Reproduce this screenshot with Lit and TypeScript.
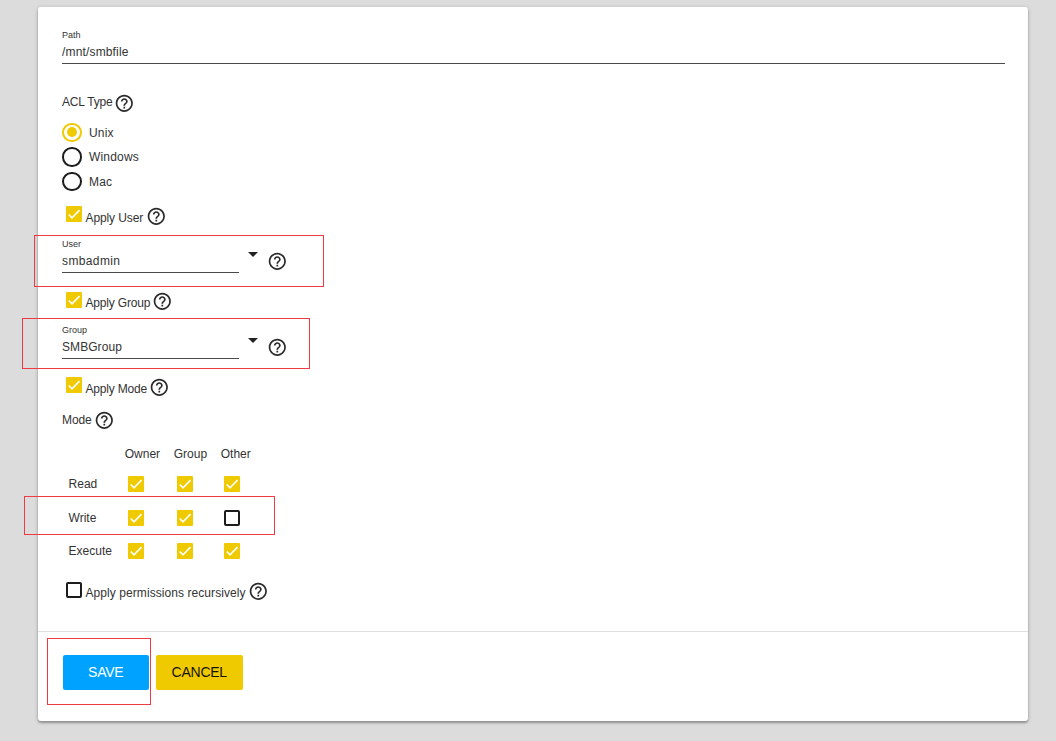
import { LitElement, html, css, svg, nothing } from "lit";
import { customElement } from "lit/decorators.js";
import { classMap } from "lit/directives/class-map.js";

const help = () => html`<svg class="help" viewBox="0 0 24 24" width="20.6" height="20.6" aria-hidden="true">
  <path fill="#2b2b2b" d="M11 18h2v-2h-2v2zm1-16C6.48 2 2 6.48 2 12s4.480 10 10 10 10-4.480 10-10S17.520 2 12 2zm0 18c-4.410 0-8-3.590-8-8s3.590-8 8-8 8 3.590 8 8-3.590 8-8 8zm0-14c-2.210 0-4 1.790-4 4h2c0-1.100.9-2 2-2s2 .9 2 2c0 2-3 1.750-3 5h2c0-2.250 3-2.500 3-5 0-2.210-1.790-4-4-4z" />
</svg>`;

const check = (on: boolean) => html`<span class=${classMap({ box: true, on })}>
  ${on
    ? html`<svg viewBox="0 0 24 24" width="16" height="16">${svg`<path d="M4.1 12.7 9 17.6 20.3 6.300" fill="none" stroke="#fff" stroke-width="2.500"/>`}</svg>`
    : nothing}
</span>`;

@customElement("app-root")
export class AppRoot extends LitElement {
  static styles = css`
    :host {
      display: block;
      position: relative;
      box-sizing: border-box;
      width: 1056px;
      height: 741px;
      padding: 7px 28px 20px 38px;
      background: #dcdcdc;
      overflow: hidden;
      font: 12px/20px "Liberation Sans", Arial, sans-serif;
      letter-spacing: 0.07px;
      color: #333;
    }
    .card {
      height: 714px;
      box-sizing: border-box;
      background: #fff;
      border-radius: 3px;
      box-shadow: 0 2px 2px rgba(0, 0, 0, 0.24), 0 1px 4px rgba(0, 0, 0, 0.2);
      display: flex;
      flex-direction: column;
    }
    .form {
      height: 625px;
      box-sizing: border-box;
      padding: 21px 23px 0 24px;
      border-bottom: 1px solid #e0e0e0;
    }
    svg { display: block; flex: none; }
    .field { height: 35px; border-bottom: 1px solid #4a4a4a; box-sizing: content-box; }
    .field small { display: block; font-size: 9px; line-height: 14px; letter-spacing: 0; }
    .field span { display: block; line-height: 20px; }
    .field .mid { letter-spacing: 0.16px; }
    .field .wide { letter-spacing: 0.38px; }
    .title { display: flex; align-items: center; height: 20px; gap: 2px; }
    .title svg { margin-top: 2px; }
    .acl { margin-top: 28px; letter-spacing: -0.2px; }
    .radios { padding-top: 8px; }
    .radio { display: flex; align-items: center; height: 24.600px; gap: 7.500px; letter-spacing: 0.18px; }
    .radio span { margin-top: 1px; }
    .dot {
      width: 19.500px; height: 19.500px; box-sizing: border-box;
      border: 2px solid #1c1c1c; border-radius: 50%;
      display: grid; place-items: center;
    }
    .dot.sel { border-color: #f0ca00; }
    .dot.sel::after { content: ""; width: 10px; height: 10px; border-radius: 50%; background: #f0ca00; }
    .box {
      width: 16px; height: 16px; box-sizing: border-box; flex: none;
      border: 2px solid #1c1c1c; border-radius: 2px; display: block;
    }
    .box.on { border: 0; border-radius: 1px; background: #f0ca00; }
    .apply { display: flex; align-items: center; height: 24px; padding-left: 3.500px; }
    .apply .box { margin: -3px 4px 0 0; }
    .apply .txt { margin-top: 4px; margin-right: 2.500px; }
    .apply .help { margin-top: 1px; }
    .tight { letter-spacing: -0.18px; }
    .tight .txt { margin-right: 2px; }
    .first { margin-top: 10px; letter-spacing: -0.1px; }
    .select { display: flex; height: 36px; margin: 9px 0 16.500px; }
    .select .field { width: 177px; }
    .select.low { margin: 10px 0 15.500px; }
    .arrow { width: 0; height: 0; border: 5px solid transparent; border-top-color: #222; border-bottom: 0; margin: 15px 8.500px 0 9px; }
    .select .help { margin-top: 14px; }
    .mode { margin-top: 11px; }
    .mode span { letter-spacing: -0.1px; }
    .grid {
      display: grid;
      grid-template-columns: 56.200px 49px 47px 45px;
      grid-template-rows: 27px 33.500px 33.500px 33.500px;
      padding-left: 6.500px;
      margin-top: 10.500px;
      align-items: center;
      letter-spacing: 0.02px;
    }
    .grid .box { margin-left: 3.600px; }
    .rec { margin-top: 11.500px; letter-spacing: 0.07px; }
    .rec .txt { margin-top: 4px; margin-right: 2px; }
    .actions { display: flex; gap: 7px; padding: 22.500px 24.500px; }
    button {
      width: 86.500px; height: 35.500px; border: 0; border-radius: 2px; padding: 0;
      font: 14px "Liberation Sans", Arial, sans-serif; letter-spacing: -0.25px;
      background: #f0ca00; color: #151500;
    }
    button.save { background: #00a2ff; color: #fff; }
    .mark { position: absolute; box-sizing: border-box; border: 1px solid #ee3a43; pointer-events: none; }
    .m1 { left: 34px; top: 235px; width: 290px; height: 52px; }
    .m2 { left: 22px; top: 318px; width: 288px; height: 51px; }
    .m3 { left: 24px; top: 496px; width: 251px; height: 39px; }
    .m4 { left: 47px; top: 638px; width: 104px; height: 67px; }
  `;

  private apply(label: string, on: boolean, cls = "") {
    return html`<div class="apply ${cls}">${check(on)}<span class="txt">${label}</span>${help()}</div>`;
  }

  private select(label: string, value: string, cls = "", row = "") {
    return html`<div class="select ${row}">
      <div class="field"><small>${label}</small><span class=${cls}>${value}</span></div>
      <i class="arrow"></i>${help()}
    </div>`;
  }

  private permissions = [
    { name: "Read", on: [true, true, true] },
    { name: "Write", on: [true, true, false] },
    { name: "Execute", on: [true, true, true] },
  ];

  render() {
    return html`
      <main class="card">
        <section class="form">
          <div class="field"><small>Path</small><span class="mid">/mnt/smbfile</span></div>
          <div class="title acl"><span>ACL Type</span>${help()}</div>
          <div class="radios">
            ${["Unix", "Windows", "Mac"].map(
              (n, i) => html`<div class="radio"><i class=${classMap({ dot: true, sel: i === 0 })}></i><span>${n}</span></div>`
            )}
          </div>
          ${this.apply("Apply User", true, "first")}
          ${this.select("User", "smbadmin", "wide")}
          ${this.apply("Apply Group", true, "tight")}
          ${this.select("Group", "SMBGroup", "", "low")}
          ${this.apply("Apply Mode", true, "tight")}
          <div class="title mode"><span>Mode</span>${help()}</div>
          <div class="grid">
            <span></span><span>Owner</span><span>Group</span><span>Other</span>
            ${this.permissions.map((p) => html`<span>${p.name}</span>${p.on.map((v) => check(v))}`)}
          </div>
          ${this.apply("Apply permissions recursively", false, "rec")}
        </section>
        <footer class="actions">
          <button class="save">SAVE</button><button>CANCEL</button>
        </footer>
      </main>
      <div class="mark m1"></div>
      <div class="mark m2"></div>
      <div class="mark m3"></div>
      <div class="mark m4"></div>
    `;
  }
}
